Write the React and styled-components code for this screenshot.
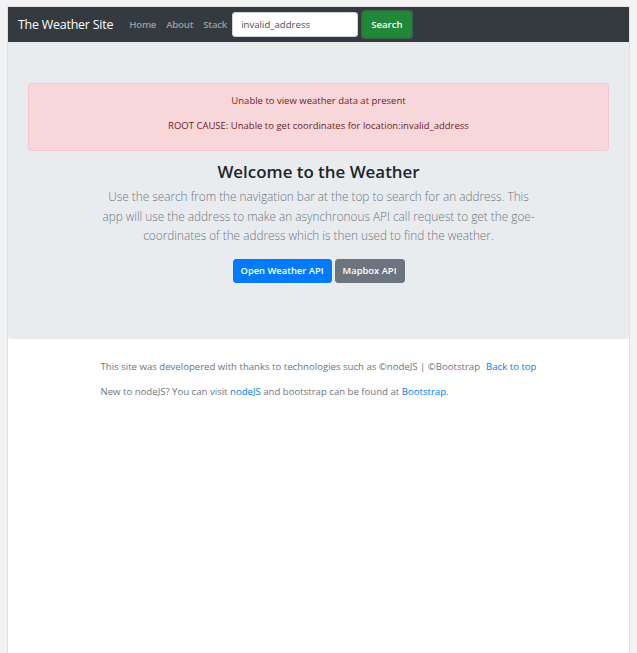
import React, { useState } from 'react';
import styled, { createGlobalStyle } from 'styled-components';

const GlobalStyle = createGlobalStyle`
  html, body {
    margin: 0;
    padding: 0;
    background-color: #f3f3f3;
    font-family: 'Open Sans', 'Noto Sans', sans-serif;
    color: #212529;
  }
`;

const Page = styled.div`
  width: 621px;
  min-height: 646px;
  margin: 7px 0 0 8px;
  background-color: #fff;
  box-shadow: 0 0 0 1px #e2e2e2;
`;

const NavBar = styled.nav`
  display: flex;
  align-items: center;
  height: 35px;
  padding: 0 10px;
  background-color: #343a40;
`;

const Brand = styled.a`
  color: #fff;
  font-size: 12.4px;
  letter-spacing: -0.2px;
  margin-right: 16px;
  text-decoration: none;
`;

const NavLinks = styled.div`
  display: flex;
  gap: 10px;
  margin-right: 5px;
`;

const NavLink = styled.a`
  color: rgba(255, 255, 255, 0.5);
  font-size: 9.6px;
  font-weight: 600;
  letter-spacing: -0.2px;
  text-decoration: none;
`;

const SearchForm = styled.form`
  display: flex;
  align-items: center;
  gap: 4px;
`;

const SearchInput = styled.input`
  width: 126px;
  height: 25px;
  box-sizing: border-box;
  padding: 0 8px;
  border: 1px solid #ced4da;
  border-radius: 3px;
  font-family: inherit;
  font-size: 9.6px;
  color: #495057;
  outline: none;
`;

const SearchButton = styled.button`
  height: 27px;
  padding: 0 8px;
  background-color: #218838;
  border: 1px solid #1e7e34;
  border-radius: 3px;
  box-shadow: 0 0 0 1px rgba(72, 180, 97, 0.35);
  color: #fff;
  font-family: inherit;
  font-size: 9.6px;
  font-weight: 600;
`;

const Jumbotron = styled.section`
  padding: 41px 20px 56px;
  background-color: #e9ecef;
  border-radius: 0 0 3px 3px;
  text-align: center;
`;

const Alert = styled.div`
  padding: 10px 12px 18px;
  margin-bottom: 9px;
  background-color: #f8d7da;
  border: 1px solid #f5c6cb;
  border-radius: 3px;
  color: #721c24;
  font-size: 9.5px;
`;

const AlertLine = styled.p`
  margin: 0;
  line-height: 13px;
  & + & {
    margin-top: 12px;
  }
`;

const Heading = styled.h1`
  margin: 0 0 4px;
  font-size: 16.9px;
  font-weight: 600;
  line-height: 23px;
  color: #212529;
`;

const Lead = styled.p`
  margin: 0 auto 13px;
  width: 438px;
  font-size: 11.8px;
  font-weight: 300;
  line-height: 19.5px;
  color: #6c757d;
`;

const ButtonRow = styled.div`
  display: flex;
  justify-content: center;
  gap: 3px;
`;

const ApiButton = styled.a`
  display: inline-flex;
  align-items: center;
  height: 24px;
  padding: 0 7px;
  box-sizing: border-box;
  border-radius: 3px;
  border: 1px solid ${(p) => (p.$variant === 'primary' ? '#007bff' : '#6c757d')};
  background-color: ${(p) => (p.$variant === 'primary' ? '#007bff' : '#6c757d')};
  color: #fff;
  font-size: 9.4px;
  font-weight: 600;
  text-decoration: none;
`;

const Footer = styled.footer`
  width: fit-content;
  margin: 0 auto;
  padding: 20px 0;
  font-size: 9.6px;
  color: #6c757d;
`;

const FooterLine = styled.p`
  margin: 0;
  line-height: 15px;
  & + & {
    margin-top: 10px;
  }
`;

const FooterLink = styled.a`
  color: #007bff;
  text-decoration: none;
  margin-left: ${(p) => (p.$spaced ? '6px' : '0')};
`;

const App = () => {
  const [address, setAddress] = useState('invalid_address');

  return (
    <>
      <GlobalStyle />
      <Page id="top">
        <NavBar>
          <Brand href="#">The Weather Site</Brand>
          <NavLinks>
            <NavLink href="#">Home</NavLink>
            <NavLink href="#">About</NavLink>
            <NavLink href="#">Stack</NavLink>
          </NavLinks>
          <SearchForm onSubmit={(e) => e.preventDefault()}>
            <SearchInput value={address} onChange={(e) => setAddress(e.target.value)} />
            <SearchButton type="submit">Search</SearchButton>
          </SearchForm>
        </NavBar>

        <Jumbotron>
          <Alert>
            <AlertLine>Unable to view weather data at present</AlertLine>
            <AlertLine>ROOT CAUSE: Unable to get coordinates for location:{address}</AlertLine>
          </Alert>
          <Heading>Welcome to the Weather</Heading>
          <Lead>
            Use the search from the navigation bar at the top to search for an address. This
            app will use the address to make an asynchronous API call request to get the goe-
            coordinates of the address which is then used to find the weather.
          </Lead>
          <ButtonRow>
            <ApiButton $variant="primary" href="#">Open Weather API</ApiButton>
            <ApiButton $variant="secondary" href="#">Mapbox API</ApiButton>
          </ButtonRow>
        </Jumbotron>

        <Footer>
          <FooterLine>
            This site was developered with thanks to technologies such as ©nodeJS | ©Bootstrap
            <FooterLink $spaced href="#top">Back to top</FooterLink>
          </FooterLine>
          <FooterLine>
            New to nodeJS? You can visit <FooterLink href="#">nodeJS</FooterLink> and bootstrap can be
            found at <FooterLink href="#">Bootstrap</FooterLink>.
          </FooterLine>
        </Footer>
      </Page>
    </>
  );
};

export default App;
